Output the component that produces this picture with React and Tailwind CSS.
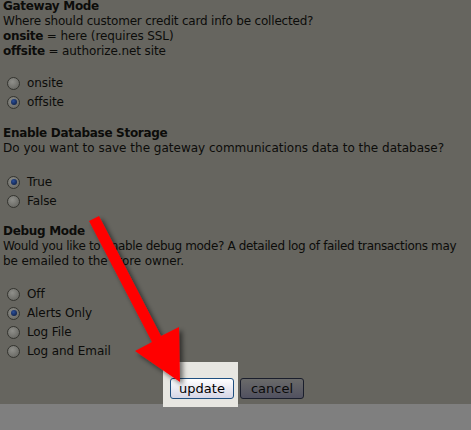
import React from "react";

const Radio = ({ checked, label }) => (
  <label className="flex items-center h-[19px]">
    <span className="ml-[7px] w-[13px] h-[13px] rounded-full border border-[#34342f] bg-[radial-gradient(circle_at_40%_35%,#8f8f8a,#5f5f5a)] flex items-center justify-center">
      {checked && <span className="w-[6px] h-[6px] rounded-full bg-[radial-gradient(circle_at_40%_35%,#2a4f9a,#0a1633)]" />}
    </span>
    <span className="ml-[7px]">{label}</span>
  </label>
);

export default function App() {
  return (
    <div className="relative w-[471px] h-[430px] overflow-hidden flex flex-col bg-[#66655f] text-[#0c0c0a] text-[12px] leading-[15px] tracking-[-0.1px] font-['DejaVu_Sans',Verdana,sans-serif]">
      {/* FORM */}
      <div className="h-[405px] shrink-0 px-[3px] -mt-[1.5px]">
        <div>
          <div className="font-bold tracking-[-0.3px]">Gateway Mode</div>
          <div className="tracking-[-0.2px]">Where should customer credit card info be collected?</div>
          <div><b className="tracking-[-0.3px]">onsite</b> = here (requires SSL)</div>
          <div><b className="tracking-[-0.3px]">offsite</b> = authorize.net site</div>
        </div>
        <div className="mt-[15px] -ml-[3px]">
          <Radio label="onsite" />
          <Radio checked label="offsite" />
        </div>

        <div className="mt-[14px]">
          <div className="font-bold tracking-[-0.3px]">Enable Database Storage</div>
          <div className="tracking-[0px]">Do you want to save the gateway communications data to the database?</div>
        </div>
        <div className="mt-[17px] -ml-[3px]">
          <Radio checked label="True" />
          <Radio label="False" />
        </div>

        <div className="mt-[13px] whitespace-nowrap">
          <div className="font-bold tracking-[-0.3px]">Debug Mode</div>
          <div className="tracking-[-0.35px]">Would you like to enable debug mode? A detailed log of failed transactions may</div>
          <div>be emailed to the store owner.</div>
        </div>
        <div className="mt-[16px] -ml-[3px]">
          <Radio label="Off" />
          <Radio checked label="Alerts Only" />
          <Radio label="Log File" />
          <Radio label="Log and Email" />
        </div>

        {/* BUTTONS */}
        <div className="mt-[1px] ml-[160px] flex items-start">
          <div className="relative z-10 pl-[7px] pr-[4px] pt-[16px] pb-[8px] bg-[#e7e6e1]">
            <button className="w-[64px] h-[21px] rounded-[3px] border border-[#1f4f80] bg-gradient-to-b from-white to-[#d6d6e6] text-[13px] leading-[19px] tracking-normal text-black font-['DejaVu_Sans',sans-serif]">
              update
            </button>
          </div>
          <button className="ml-[2px] mt-[16px] w-[64px] h-[21px] rounded-[3px] border border-[#1a1e2c] bg-gradient-to-b from-[#6a6a69] to-[#515160] text-[13px] leading-[19px] tracking-normal text-[#0a0a0a] font-['DejaVu_Sans',sans-serif]">
            cancel
          </button>
        </div>
      </div>

      {/* BOTTOM STRIP */}
      <div className="flex-1 bg-[#7f7f7f]" />

      {/* ARROW */}
      <svg className="absolute inset-0 z-20 pointer-events-none" width="471" height="430">
        <defs>
          <filter id="sh" x="-20%" y="-20%" width="150%" height="150%">
            <feDropShadow dx="3" dy="3" stdDeviation="2.5" floodColor="#000" floodOpacity="0.55" />
          </filter>
        </defs>
        <polygon
          points="89,221 99,216 161,336 179,327 180,382 135,351 152,342"
          fill="#ff0000"
          filter="url(#sh)"
        />
      </svg>
    </div>
  );
}
